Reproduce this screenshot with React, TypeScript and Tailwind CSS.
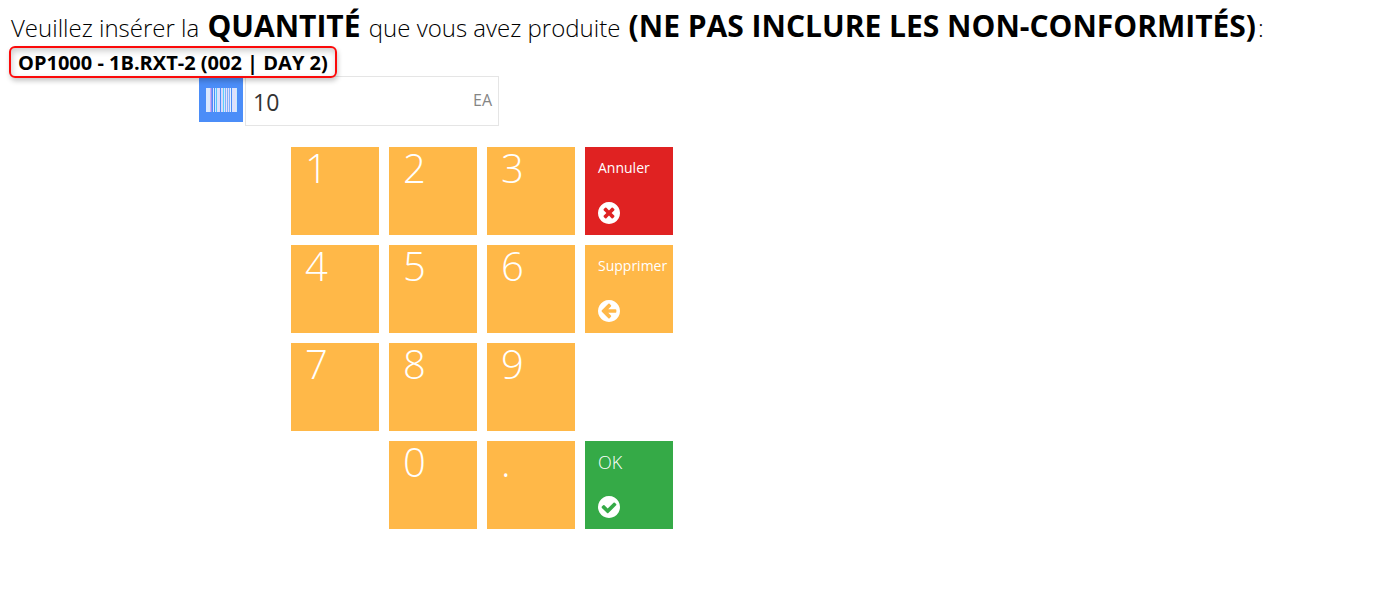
import { useState } from "react";
import type { ReactNode } from "react";

const DISC =
  "q0 209-103 385.5t-279.5 279.5-385.5 103-385.5-103-279.5-279.5-103-385.5 103-385.5 279.5-279.5 385.5-103 385.5 103 279.5 279.5 103 385.5z";

const ICONS = {
  cancel:
    "M1277 1122q0-26-19-45l-181-181 181-181q19-19 19-45 0-27-19-46l-90-90q-19-19-46-19-26 0-45 19l-181 181-181-181q-19-19-45-19-27 0-46 19l-90 90q-19 19-19 46 0 26 19 45l181 181-181 181q-19 19-19 45 0 27 19 46l90 90q19 19 46 19 26 0 45-19l181-181 181 181q19 19 45 19 27 0 46-19l90-90q19-19 19-46zm387-226" +
    DISC,
  back:
    "M1408 960v-128q0-26-19-45t-45-19h-502l189-189q19-19 19-45t-19-45l-91-91q-18-18-45-18t-45 18l-362 362-91 91q-18 18-18 45t18 45l91 91 362 362q18 18 45 18t45-18l91-91q18-18 18-45t-18-45l-189-189h502q26 0 45-19t19-45zm256-64" +
    DISC,
  ok:
    "M1412 734q0-28-18-46l-91-90q-19-19-45-19t-45 19l-408 407-226-226q-19-19-45-19t-45 19l-91 90q-18 18-18 46 0 27 18 45l362 362q19 19 45 19 27 0 46-19l543-543q18-18 18-45zm252 162" +
    DISC,
};

// x, width, colour of each bar
const BARS: [number, number, string][] = [
  [0, 4, "#dbe8fd"],
  [4, 1, "#c9b0f2"],
  [5, 1, "#8d8cf5"],
  [7, 1, "#e3e3fc"],
  [9, 1, "#c4f0fd"],
  [10, 1, "#5cc0fb"],
  [11, 3, "#dcdffb"],
  [15, 2, "#d8d8fa"],
  [17, 1, "#5cd0fb"],
  [18, 1, "#dde6fd"],
  [20, 1, "#e6e4fc"],
  [22, 1, "#e2dcfb"],
  [24, 1, "#e4f1fe"],
  [26, 3, "#d9e2fc"],
  [29, 1, "#e8dcfa"],
  [30, 1, "#c4effd"],
];

function Barcode() {
  return (
    <svg viewBox="0 0 31 24" className="h-6 w-[31px]" shapeRendering="crispEdges" aria-hidden="true">
      <rect width="31" height="24" fill="#83b1fa" />
      <rect x="6" width="1" height="24" fill="#4b8df8" />
      <rect x="8" width="1" height="24" fill="#4b8df8" />
      <rect x="14" width="1" height="24" fill="#4b8df8" />
      <rect x="25" width="1" height="24" fill="#4b8df8" />
      {BARS.map(([x, w, fill]) => (
        <rect key={x} x={x} width={w} height="24" fill={fill} />
      ))}
    </svg>
  );
}

function DigitKey({ value, className = "", onPress }: { value: string; className?: string; onPress: (v: string) => void }) {
  return (
    <button
      type="button"
      onClick={() => onPress(value)}
      className={`flex h-[88px] items-start bg-[#ffb848] px-[14px] text-[40px] leading-[42px] font-light text-white ${className}`}
    >
      {value}
    </button>
  );
}

function ActionKey({ icon, className, onPress, children }: { icon: keyof typeof ICONS; className: string; onPress: () => void; children: ReactNode }) {
  return (
    <button
      type="button"
      onClick={onPress}
      className={`flex h-[88px] flex-col items-start justify-between py-[11px] pl-[13px] whitespace-nowrap text-white ${className}`}
    >
      {children}
      <svg viewBox="128 128 1536 1536" className="size-[22px] fill-white" aria-hidden="true">
        <path d={ICONS[icon]} />
      </svg>
    </button>
  );
}

export default function App() {
  const [quantity, setQuantity] = useState("10");
  const press = (v: string) => setQuantity((q) => q + v);

  return (
    <main className="bg-white px-[9px] pt-2 font-['Open_Sans','Noto_Sans',sans-serif] text-black">
      <h1 className="pl-[2px] text-2xl leading-9 font-light">
        Veuillez insérer la <strong className="mx-[2px] text-[30px] leading-9 font-bold">QUANTITÉ</strong> que vous avez produite{" "}
        <strong className="mx-[2px] text-[30px] leading-9 font-bold">(NE PAS INCLURE LES NON-CONFORMITÉS)</strong>:
      </h1>

      <p className="relative z-10 flex h-8 w-fit items-center rounded-md border-2 border-[#fb0a0a] px-[7px] pt-[2px] text-xl leading-7 font-bold shadow-[1px_3px_5px_rgba(0,0,0,0.22),inset_1px_3px_6px_rgba(0,0,0,0.2)]">
        OP1000 - 1B.RXT-2 (002 | DAY 2)
      </p>

      <div className="-mt-[2px] ml-[190px] flex items-start gap-[2px]">
        <button type="button" aria-label="Scanner" className="mt-[2px] flex size-11 items-center justify-center bg-[#4b8df8]">
          <Barcode />
        </button>
        <div className="flex h-[50px] w-[254px] items-start border border-[#e5e5e5] pt-[9px] pr-[6px] pl-[7px]">
          <input
            id="quantity"
            aria-label="Quantité"
            value={quantity}
            onChange={(e) => setQuantity(e.target.value)}
            className="min-w-0 flex-1 text-[23px] leading-8 text-[#333333] outline-none"
          />
          <label htmlFor="quantity" className="text-base leading-7 text-[#858585]">
            EA
          </label>
        </div>
      </div>

      <div className="mt-[21px] ml-[282px] grid w-fit grid-cols-[repeat(4,88px)] gap-[10px] pb-12">
        <DigitKey value="1" onPress={press} />
        <DigitKey value="2" onPress={press} />
        <DigitKey value="3" onPress={press} />
        <ActionKey icon="cancel" className="bg-[#e02222] text-sm" onPress={() => setQuantity("")}>
          Annuler
        </ActionKey>
        <DigitKey value="4" onPress={press} />
        <DigitKey value="5" onPress={press} />
        <DigitKey value="6" onPress={press} />
        <ActionKey icon="back" className="bg-[#ffb848] text-sm" onPress={() => setQuantity((q) => q.slice(0, -1))}>
          Supprimer
        </ActionKey>
        <DigitKey value="7" onPress={press} />
        <DigitKey value="8" onPress={press} />
        <DigitKey value="9" onPress={press} />
        <DigitKey value="0" className="col-start-2" onPress={press} />
        <DigitKey value="." onPress={press} />
        <ActionKey icon="ok" className="bg-[#35aa47] text-[18px] leading-5 font-light" onPress={() => undefined}>
          OK
        </ActionKey>
      </div>
    </main>
  );
}
